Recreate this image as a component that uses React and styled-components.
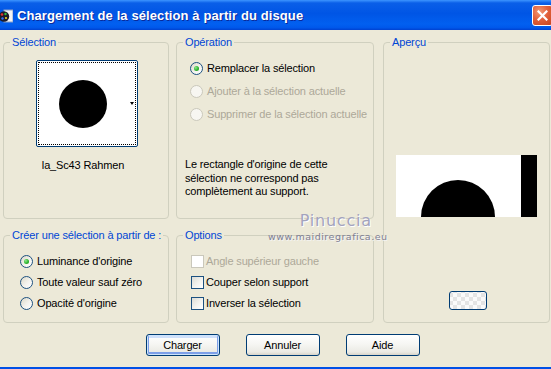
import React from "react";
import styled, { createGlobalStyle } from "styled-components";

const GlobalStyle = createGlobalStyle`
  html, body {
    margin: 0;
    padding: 0;
    background: #ece9d8;
  }
  body {
    font-family: "Liberation Sans", Arial, sans-serif;
    font-size: 11px;
    letter-spacing: -0.15px;
    color: #000;
  }
`;

function App() {
  return (
    <Window>
      <GlobalStyle />
      <TitleBar>
        <TitleIcon width="14" height="14" viewBox="0 0 14 14">
          <rect x="5" y="1" width="9" height="12" fill="#f4f4f4" stroke="#8aa0c8" />
          <circle cx="5" cy="7.5" r="5.2" fill="#1b1b2a" />
          <circle cx="3" cy="5.5" r="1.3" fill="#e03030" />
          <circle cx="6.5" cy="5" r="1.2" fill="#30c040" />
          <circle cx="3.5" cy="9.5" r="1.2" fill="#3070ff" />
          <circle cx="7" cy="9" r="1.1" fill="#f0d020" />
        </TitleIcon>
        <Title>Chargement de la sélection à partir du disque</Title>
        <CloseButton>
          <svg width="11" height="11" viewBox="0 0 11 11">
            <path d="M1.5 1.5 L9.5 9.5 M9.5 1.5 L1.5 9.5" stroke="#fff" strokeWidth="2.2" strokeLinecap="square" />
          </svg>
        </CloseButton>
      </TitleBar>

      <Body>
        <Groups>
          <Group $area="sel">
            <Legend>Sélection</Legend>
            <Centered>
              <SelectionPicker>
                <Dot $size={48} />
                <DropArrow />
              </SelectionPicker>
              <PickerLabel>la_Sc43 Rahmen</PickerLabel>
            </Centered>
          </Group>

          <Group $area="op">
            <Legend>Opération</Legend>
            <OptionList $pad={13} $gap={10}>
              <Option>
                <Radio $checked />
                Remplacer la sélection
              </Option>
              <Option $disabled>
                <Radio $disabled />
                Ajouter à la sélection actuelle
              </Option>
              <Option $disabled>
                <Radio $disabled />
                Supprimer de la sélection actuelle
              </Option>
            </OptionList>
            <Note>
              Le rectangle d'origine de cette
              <br />
              sélection ne correspond pas
              <br />
              complètement au support.
            </Note>
          </Group>

          <Group $area="prev">
            <Legend>Aperçu</Legend>
            <Centered>
              <PreviewImage width="141" height="62" viewBox="0 0 141 62">
                <rect width="141" height="62" fill="#fff" />
                <rect x="125" width="16" height="62" fill="#000" />
                <circle cx="62" cy="62" r="37" fill="#000" />
              </PreviewImage>
              <SwatchButton />
            </Centered>
          </Group>

          <Group $area="src">
            <Legend>Créer une sélection à partir de :</Legend>
            <OptionList $pad={16} $gap={8}>
              <Option>
                <Radio $checked />
                Luminance d'origine
              </Option>
              <Option>
                <Radio />
                Toute valeur sauf zéro
              </Option>
              <Option>
                <Radio />
                Opacité d'origine
              </Option>
            </OptionList>
          </Group>

          <Group $area="opt">
            <Legend>Options</Legend>
            <OptionList $pad={14} $gap={8}>
              <Option $disabled>
                <Check $disabled />
                Angle supérieur gauche
              </Option>
              <Option>
                <Check />
                Couper selon support
              </Option>
              <Option>
                <Check />
                Inverser la sélection
              </Option>
            </OptionList>
          </Group>
        </Groups>

        <ButtonRow>
          <Button $default>Charger</Button>
          <Button>Annuler</Button>
          <Button>Aide</Button>
        </ButtonRow>
      </Body>

      <Watermark>
        <WatermarkName>Pinuccia</WatermarkName>
        <WatermarkUrl>www.maidiregrafica.eu</WatermarkUrl>
      </Watermark>
    </Window>
  );
}

export default App;

const Window = styled.div`
  position: relative;
  width: 551px;
  height: 369px;
  display: flex;
  flex-direction: column;
  overflow: hidden;
`;

const TitleBar = styled.div`
  height: 30px;
  flex: none;
  display: flex;
  align-items: center;
  background: linear-gradient(
    to bottom,
    #3d95ff 0%,
    #0a5fe8 10%,
    #0055e5 45%,
    #0260f0 80%,
    #0058eb 92%,
    #0041d0 100%
  );
`;

const TitleIcon = styled.svg`
  flex: none;
  margin-left: -1px;
  margin-top: 1px;
`;

const Title = styled.div`
  margin-left: 4px;
  color: #fff;
  font-family: "Liberation Sans", Arial, sans-serif;
  font-weight: bold;
  font-size: 13px;
  letter-spacing: 0.1px;
  text-shadow: 1px 1px 0 #0a2a9a;
`;

const CloseButton = styled.div`
  margin-left: auto;
  margin-right: -2px;
  width: 21px;
  height: 21px;
  box-sizing: border-box;
  border: 1px solid #fff;
  border-radius: 3px;
  background: radial-gradient(circle at 35% 30%, #f29a76 0%, #e2613c 45%, #c8431c 100%);
  display: flex;
  align-items: center;
  justify-content: center;
`;

const Body = styled.div`
  flex: 1;
  background: #ece9d8;
  border-bottom: 2px solid #0050e6;
  padding: 6px 1px 0 3px;
  display: flex;
  flex-direction: column;
`;

const Groups = styled.div`
  display: grid;
  grid-template-columns: 166px 7px 198px 9px 167px;
  grid-template-rows: 183px 94px;
  row-gap: 10px;
  grid-template-areas:
    "sel . op . prev"
    "src . opt . prev";
`;

const Group = styled.fieldset`
  grid-area: ${(p) => p.$area};
  margin: 0;
  padding: 0;
  min-width: 0;
  border: 1px solid #d0d0bf;
  border-radius: 4px;
  display: flex;
  flex-direction: column;
`;

const Legend = styled.legend`
  margin-left: 6px;
  padding: 0 2px;
  color: #0046d5;
  font-size: 11px;
  line-height: 13px;
  white-space: nowrap;
`;

const Centered = styled.div`
  display: flex;
  flex-direction: column;
  align-items: center;
`;

const SelectionPicker = styled.div`
  margin-top: 11px;
  margin-left: 1px;
  width: 102px;
  height: 87px;
  box-sizing: border-box;
  border: 1px solid #003c74;
  border-radius: 2px;
  background: #fff;
  outline: 1px dotted #000;
  outline-offset: -3px;
  display: flex;
  align-items: center;
  padding-left: 22px;
`;

const Dot = styled.div`
  width: ${(p) => p.$size}px;
  height: ${(p) => p.$size}px;
  border-radius: 50%;
  background: #000;
`;

const DropArrow = styled.div`
  margin-left: auto;
  margin-right: 3px;
  width: 0;
  height: 0;
  border-left: 2.5px solid transparent;
  border-right: 2.5px solid transparent;
  border-top: 3px solid #000;
`;

const PickerLabel = styled.div`
  margin-top: 12px;
  line-height: 13px;
  margin-right: 6px;
`;

const OptionList = styled.div`
  margin-top: 13px;
  padding-left: ${(p) => p.$pad}px;
  display: flex;
  flex-direction: column;
  gap: ${(p) => p.$gap}px;
`;

const Option = styled.div`
  display: flex;
  align-items: center;
  gap: 4px;
  height: 13px;
  line-height: 13px;
  color: ${(p) => (p.$disabled ? "#aca899" : "#000")};
  white-space: nowrap;
`;

const Radio = styled.span`
  flex: none;
  width: 13px;
  height: 13px;
  box-sizing: border-box;
  border-radius: 50%;
  border: 1px solid ${(p) => (p.$disabled ? "#cac8bb" : "#1c5180")};
  background: ${(p) =>
    p.$disabled
      ? "#f7f6f1"
      : "linear-gradient(135deg, #dcd9c8 0%, #f4f3ee 55%, #ffffff 100%)"};
  display: flex;
  align-items: center;
  justify-content: center;
  &::after {
    content: "";
    display: ${(p) => (p.$checked ? "block" : "none")};
    width: 5px;
    height: 5px;
    border-radius: 50%;
    background: radial-gradient(circle at 35% 35%, #8ee68e 0%, #2eb52e 55%, #1b8f1b 100%);
  }
`;

const Check = styled.span`
  flex: none;
  width: 13px;
  height: 13px;
  box-sizing: border-box;
  margin-right: -2px;
  border: 1px solid ${(p) => (p.$disabled ? "#cac8bb" : "#1c5180")};
  background: ${(p) =>
    p.$disabled
      ? "#ffffff"
      : "linear-gradient(135deg, #dcdcd5 0%, #f3f3ef 55%, #ffffff 100%)"};
`;

const Note = styled.div`
  margin-top: 37px;
  padding-left: 8px;
  line-height: 13.5px;
`;

const PreviewImage = styled.svg`
  display: block;
  margin-top: 106px;
`;

const SwatchButton = styled.div`
  margin-top: 74px;
  margin-left: 2px;
  width: 38px;
  height: 19px;
  box-sizing: border-box;
  border: 1px solid #003c74;
  border-radius: 3px;
  background-color: #f4f4f2;
  background-image: conic-gradient(#e4e4e4 25%, #fafafa 0 50%, #e4e4e4 0 75%, #fafafa 0);
  background-size: 8px 8px;
  background-position: 3px 1px;
`;

const ButtonRow = styled.div`
  margin-top: 11px;
  display: flex;
  justify-content: center;
  gap: 26px;
  padding-left: 12px;
`;

const Button = styled.div`
  width: 74px;
  height: 22px;
  box-sizing: border-box;
  border: 1px solid #003c74;
  border-radius: 3px;
  background: linear-gradient(to bottom, #ffffff 0%, #f6f6f3 45%, #ebeae4 85%, #d8d4c9 100%);
  box-shadow: ${(p) =>
    p.$default
      ? "inset 0 0 0 1px #cde3fb, inset 0 -1px 0 2px #7d9fe8, inset 0 1px 0 2px #cfe0fb"
      : "none"};
  display: flex;
  align-items: center;
  justify-content: center;
  font-size: 11px;
`;

const Watermark = styled.div`
  position: absolute;
  left: 268px;
  top: 211px;
  display: flex;
  flex-direction: column;
  align-items: center;
  pointer-events: none;
`;

const WatermarkName = styled.div`
  font-family: "DejaVu Sans", Verdana, sans-serif;
  font-size: 16px;
  letter-spacing: 0.8px;
  line-height: 20px;
  color: #a3a3bd;
  text-shadow: 1px 1px 0 #ffffff;
  margin-left: 16px;
`;

const WatermarkUrl = styled.div`
  font-family: "DejaVu Sans", Verdana, sans-serif;
  font-size: 9.5px;
  line-height: 12px;
  letter-spacing: 0.5px;
  color: #7e7e92;
  text-shadow: 1px 1px 0 #f4f4f4;
`;
